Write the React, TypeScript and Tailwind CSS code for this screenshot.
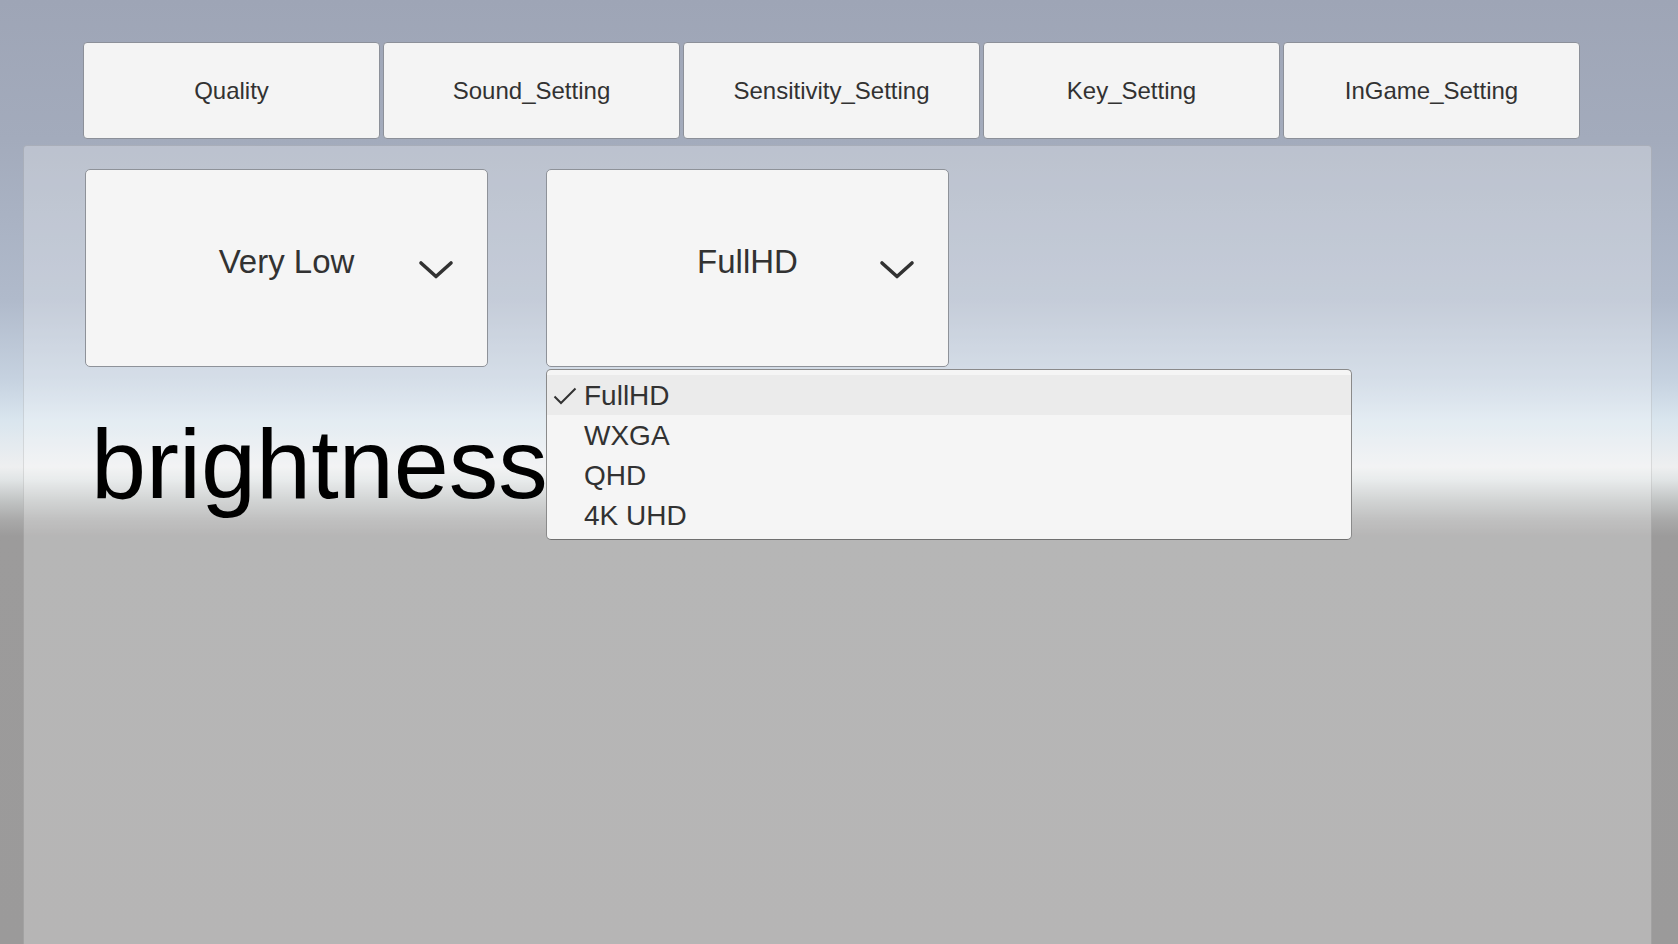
const tabs = ['Quality', 'Sound_Setting', 'Sensitivity_Setting', 'Key_Setting', 'InGame_Setting'];
const resolutions = ['FullHD', 'WXGA', 'QHD', '4K UHD'];

function Chevron() {
  return (
    <svg width="36" height="20" viewBox="0 0 36 20" className="absolute right-[33px] top-[90px]">
      <polyline points="3,3 18,16.5 33,3" fill="none" stroke="#323232" strokeWidth="3.6" strokeLinecap="round" strokeLinejoin="round" />
    </svg>
  );
}

function Dropdown({ value, open }: { value: string; open?: boolean }) {
  return (
    <div className="relative w-[403px] h-[198px] bg-[#f5f5f5] border border-[#8e9299] rounded-[5px]">
      <div className="h-full flex items-center justify-center pb-[12px] text-[33px] text-[#323232]">{value}</div>
      <Chevron />
      {open && (
        <div className="absolute left-[-1px] top-[199px] z-10 w-[806px] bg-[#f5f5f5] border border-[#8a8a8a] border-b-[#6f6f6f] rounded-[5px] pt-[5px] pb-[4px]">
          {resolutions.map((r) => (
            <div
              key={r}
              className={`relative h-[40px] flex items-center pl-[37px] text-[28px] text-[#323232] ${r === value ? 'bg-[#ebebeb]' : ''}`}
            >
              {r === value && (
                <svg width="24" height="18" viewBox="0 0 24 18" className="absolute left-[6px] top-[12px]">
                  <polyline points="1.5,9.5 8,16 22.5,1.5" fill="none" stroke="#323232" strokeWidth="2" />
                </svg>
              )}
              <span className="translate-y-[1px]">{r}</span>
            </div>
          ))}
        </div>
      )}
    </div>
  );
}

export default function App() {
  return (
    <div className="w-[1678px] h-[944px] overflow-hidden flex flex-col font-['Liberation_Sans',Arial,sans-serif] bg-[linear-gradient(180deg,#9ea5b6_0px,#a3abbc_140px,#b0bacb_300px,#c6d2e0_380px,#d9e5ee_420px,#eeeff0_467px,#e0e4e5_480px,#c2c5c5_500px,#a9a9a9_520px,#9c9b9b_536px,#9b9a9a_944px)]">
      {/* Tab buttons */}
      <div className="flex gap-[3px] pt-[42px] pl-[83px]">
        {tabs.map((t) => (
          <button
            key={t}
            className="w-[297px] h-[97px] flex items-center justify-center bg-[#f4f4f4] border border-[#8c9099] rounded-[4px] text-[24px] text-[#323232]"
          >
            {t}
          </button>
        ))}
      </div>

      {/* Settings panel */}
      <div className="mt-[6px] ml-[23px] w-[1629px] flex-1 bg-white/[0.27] border border-black/10 border-b-0 rounded-t-[4px] pt-[23px] pl-[61px]">
        <div className="flex gap-[58px]">
          <Dropdown value="Very Low" />
          <Dropdown value="FullHD" open />
        </div>
        <div className="mt-[47px] ml-[6px] text-[99px] leading-[100px] text-black">brightness</div>
      </div>
    </div>
  );
}
